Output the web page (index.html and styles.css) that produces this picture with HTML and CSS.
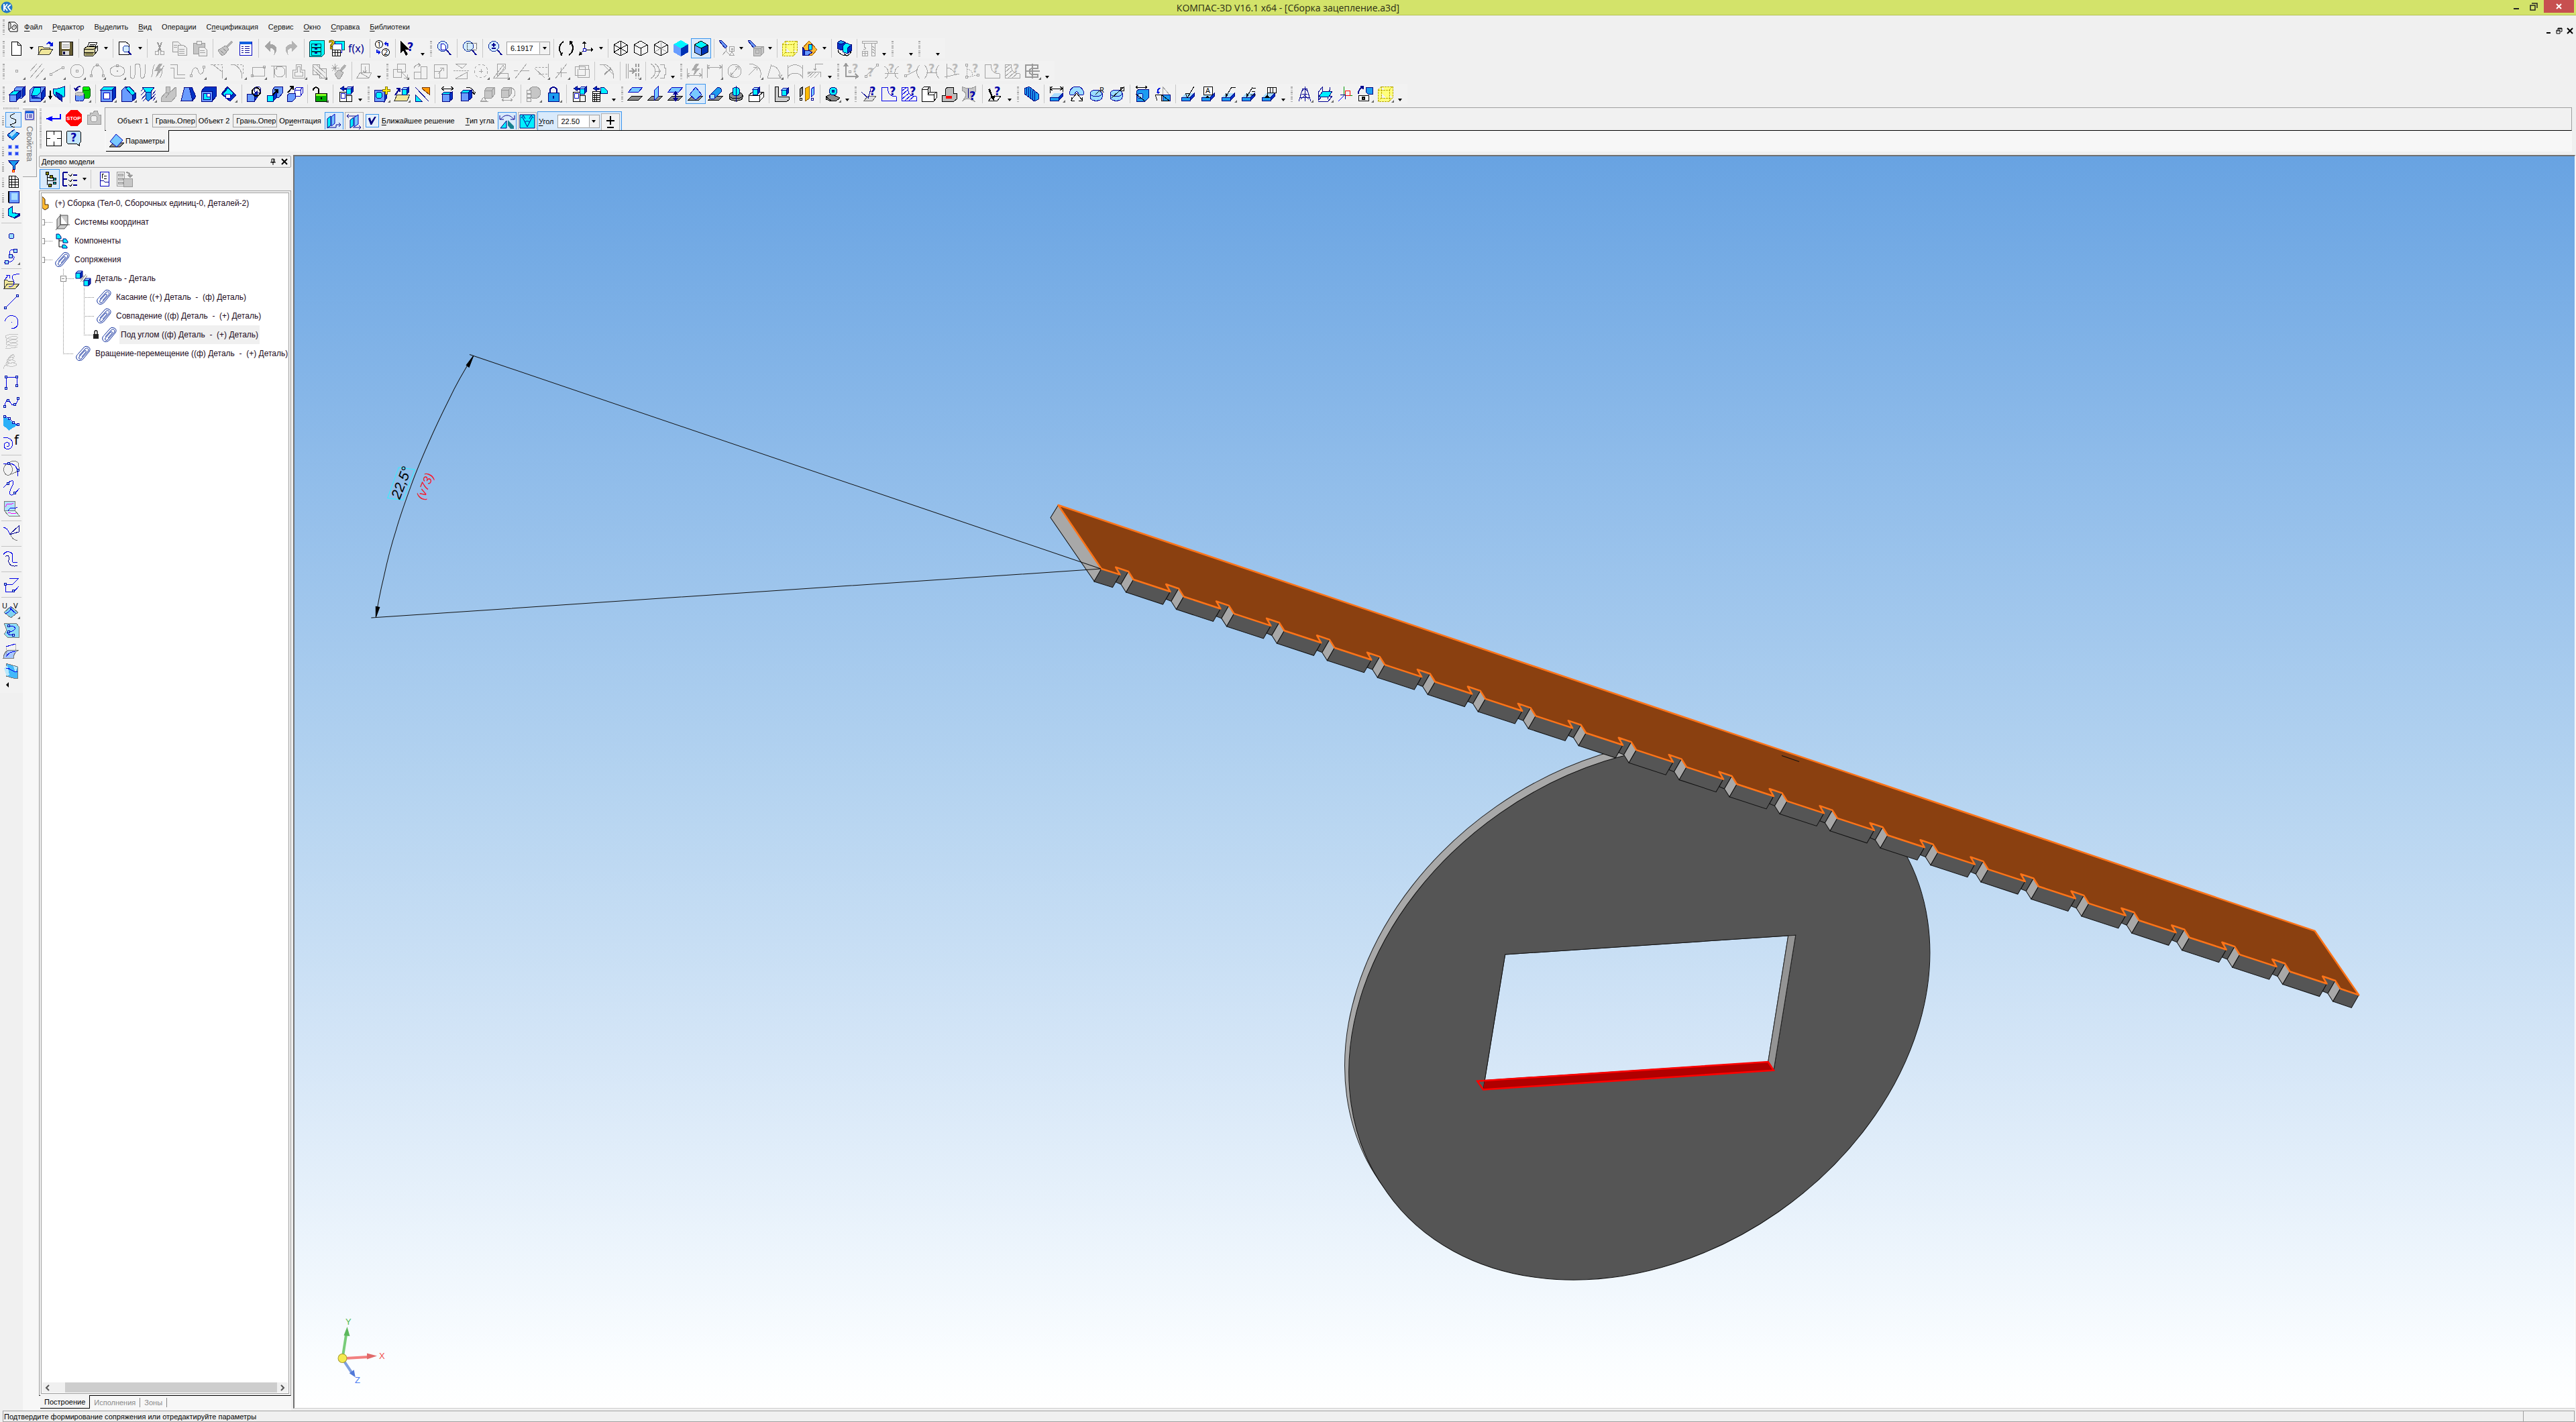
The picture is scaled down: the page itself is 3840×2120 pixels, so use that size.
FILE: index.html
```html
<!DOCTYPE html>
<html lang="ru">
<head>
<meta charset="utf-8">
<title>КОМПАС-3D V16.1 x64 - [Сборка зацепление.a3d]</title>
<link rel="stylesheet" href="styles.css">
</head>
<body>
<svg class="defs" aria-hidden="true">
<defs>
<g id="mini"><path class="C" d="M0 3h7v8h-7z"/><path class="S" d="M0 3l3-3h7l-3 3z"/><path class="D" d="M7 3l3-3v8l-3 3z"/></g>
<g id="hex"><path class="k" d="M12 1l10 6v11l-10 5-10-5v-11zM2 7l10 5 10-5M12 12v11"/></g>
<g id="lens"><circle class="L" cx="10" cy="9" r="7.500"/><path class="nn" d="M16 15l6 7"/></g>
<g id="plane"><path class="P" d="M1 21l6-6h16l-6 6z"/></g>
<g id="slab"><path class="L0" d="M2 17l7-6h12l-6 6z"/><path class="A" d="M2 17h13v5h-13z"/><path class="D" d="M15 17l6-6v5l-6 6z"/></g>
<g id="disk"><path class="S" d="M2 11v6c0 7 18 7 18 0v-6"/><ellipse class="S" cx="11" cy="11" rx="9" ry="5"/></g>
<g id="clip"><path class="nc" d="M6 15l9-10c4-3 6 1 4 4l-9 10c-3 3-5 1-4-2l8-9c2-1 3 0 2 2l-6 7M19 2c3 1 4 4 2 7l-9 11c-4 4-9 3-10-1-1-3 1-5 3-7l8-9c2-2 4-2 6-1"/></g>
<g id="sheets"><path class="k" d="M3 9h10v14h-10zM13 14h8v9h-8z"/><path class="W" d="M5 11h6v7h-6z"/><path class="D" d="M4 4l5-3v2h4v2h-4v2z"/></g>
<g id="tooth"><path class="dark" d="M1669.500 857.300L1663.200 846.300 1682 852.700 1671 871.700 1663.300 868.500Z"/><path class="light" d="M1682 852.700l7.600 12-11 19-7.600-12z"/></g>
<g id="link"><use href="#tooth"/><path class="dark" d="M1689.600 864.700l54.900 18-11 19-54.900-18z"/></g>
<g id="links4"><use href="#link"/><use href="#link" transform="translate(74.960 25.400)"/><use href="#link" transform="translate(149.920 50.800)"/><use href="#link" transform="translate(224.880 76.200)"/></g>
<linearGradient id="sky" x1="0" y1="0" x2="0" y2="1"><stop offset="0" stop-color="#68a3e2"/><stop offset=".26" stop-color="#91bdea"/><stop offset=".5" stop-color="#b4d3f0"/><stop offset=".72" stop-color="#d5e6f7"/><stop offset=".96" stop-color="#fafdff"/><stop offset="1" stop-color="#fff"/></linearGradient>
<clipPath id="under"><path d="M1900 900L3450 1389V2100H1900Z"/></clipPath>
</defs>
</svg>

<header class="title">
  <svg class="logo" width="18" height="18"><circle cx="9" cy="9" r="8.500" fill="#2478c8"/><path d="M5 4v10M6 9l4-5M6 9l4 5M10 9l5-4M11 9l4 5" stroke="#fff" stroke-width="2" fill="none"/></svg>
  <h1>КОМПАС-3D V16.1 x64 - [Сборка зацепление.a3d]</h1>
  <div class="winbtns">
    <button aria-label="Свернуть"><svg width="10" height="12"><path d="M1 9h8" stroke="#222" stroke-width="2"/></svg></button>
    <button aria-label="Развернуть"><svg width="12" height="12"><path d="M3 1h8v7M1 4h7v7h-7z" fill="none" stroke="#222" stroke-width="1.500"/></svg></button>
    <button class="close" aria-label="Закрыть"><svg width="9" height="9"><path d="M1 1l7 7M8 1l-7 7" stroke="#fff" stroke-width="2"/></svg></button>
  </div>
</header>

<nav class="menu">
  <i class="grip"></i>
  <svg width="18" height="18"><path class="kw" d="M2 2h9l4 4v10h-11l-2-3z"/><path class="k" d="M2 13l3-2v-7l-3-2M7 9l3-3 3 1v4l-3 2-3-1zM9 9h2"/></svg>
  <a href="#"><u>Ф</u>айл</a><a href="#"><u>Р</u>едактор</a><a href="#">В<u>ы</u>делить</a><a href="#"><u>В</u>ид</a><a href="#">Опера<u>ц</u>ии</a><a href="#">С<u>п</u>ецификация</a><a href="#">С<u>е</u>рвис</a><a href="#"><u>О</u>кно</a><a href="#"><u>С</u>правка</a><a href="#"><u>Б</u>иблиотеки</a>
  <div class="mdi">
    <button aria-label="Свернуть документ"><svg width="10" height="10"><path class="k2" d="M2 8h6"/></svg></button>
    <button aria-label="Восстановить документ"><svg width="10" height="10"><path class="k2" d="M3 1.500h6"/><path class="k" d="M9 1v5h-2M1 4h5v5h-5zM1 5h5M3 1v2"/></svg></button>
    <button aria-label="Закрыть документ"><svg width="10" height="10"><path class="k2" d="M1 1l8 8M9 1l-8 8"/></svg></button>
  </div>
</nav>

<div class="bars">
<div class="row">
 <div class="tb"><i class="grip"></i>
  <button><svg><path class="kw" d="M4 2h9l5 5v15h-14z"/><path class="k" d="M13 2v5h5"/></svg></button><b class="dd"></b>
  <button><svg><path class="O" d="M1 21v-12h6l2 2h9v3"/><path class="O" d="M1 21l5-8h17l-5 8z"/><path class="blu" d="M13 6c2-5 6-5 8-2l2-1v6h-6l2-2c-1-2-3-2-6-1"/></svg></button>
  <button><svg><path fill="#665c33" stroke="#111" d="M2 2h20v20h-20z"/><path fill="#fff" d="M6 3h12v10h-12z"/><path class="g" d="M7 6h10M7 8h10M7 10h10"/><path fill="#ddd" d="M7 16h10v6h-10z"/><path fill="#004" d="M8 17h3v4h-3z"/></svg></button><s></s>
  <button><svg><path class="kw" d="M6 11l3-8h12l-4 8z"/><path class="k" d="M10 6h8M9 8h8"/><path fill="#d8d2a0" stroke="#000" d="M1 13l5-4h15l-4 5v7l-2 2h-13l-1-2z"/><path class="k" d="M1 13h15l5-4v7l-4 5M2 18h14"/><path fill="#8a8450" d="M3 19h12v3h-12z"/></svg></button><b class="dd"></b><s></s>
  <button><svg><path class="kw" d="M2 2h10l5 4v15h-15z"/><circle class="L" cx="13" cy="13" r="5"/><path class="nn" d="M16 17l5 5"/></svg></button><b class="dd"></b><s></s>
  <button><svg><path class="gg" d="M9 3l5 13M15 3l-5 13"/><circle class="g" cx="8" cy="19" r="3"/><circle class="g" cx="16" cy="19" r="3"/></svg></button>
  <button><svg><path class="Gw" d="M1 2h8l4 4v11h-12z"/><path class="Gw" d="M9 7h8l5 4v11h-13z"/><path class="g" d="M3 7h5M3 10h5M11 13h8M11 16h8M11 19h8"/></svg></button>
  <button><svg><path class="G" d="M2 4h17v16h-17z"/><path class="Gw" d="M7 1h7v5h-7zM10 10h8l4 4v9h-12z"/><path class="g" d="M12 15h7M12 18h8"/></svg></button><s></s>
  <button><svg><path class="G" d="M12 8l-11 7 3 5 4 3 4-3 5-7z"/><path class="ggg" d="M14 10l8-8"/><path class="Gw" d="M4 15l6 5M8 12l6 5"/></svg></button>
  <button><svg><path class="W" d="M3 2h18v20h-18z"/><path fill="#1060e0" d="M3 2h18v4h-18z"/><path class="n" d="M6 9h3M11 9h7M6 12h3M11 12h7M6 15h3M11 15h7M6 18h3M11 18h7"/></svg></button><s></s>
  <button><svg><path fill="#a4a4a4" d="M2 9l9-8v5c11 0 12 9 5 17 3-8 0-11-5-11v5z"/></svg></button>
  <button><svg><path fill="#b4b4b4" d="M22 9l-9-8v5c-11 0-12 9-5 17-3-8 0-11 5-11v5z"/></svg></button><s></s>
  <button><svg><path class="C2" d="M1 3l3-3h19v21l-3 3h-19z"/><path class="C2" d="M4 5h14v5h-14zM4 11h14v5h-14zM4 17h14v5h-14z"/><path class="nn" d="M9 7h4M9 13h4M9 19h4"/></svg></button>
  <button><svg><path class="C2" d="M9 1h14v13h-14z"/><path class="W" d="M5 5h14v13h-14z"/><path class="kw" d="M5 14h12v9h-12zM5 18h12M9 14v9M13 14v9"/><text class="q gold" x="0" y="13">?</text></svg></button>
  <button><svg><text class="fx" x="-1" y="18">f(x)</text></svg></button><s></s>
  <button><svg><circle class="kw" cx="7" cy="6" r="5.500"/><circle class="kw" cx="17" cy="18" r="5.500"/><text x="4" y="10" class="sm">1</text><text x="14" y="22" class="sm">2</text><path class="blu" d="M14 5l4-3v2h3v5h-2v-3h-1v2zM10 18l-4 3v-2h-3v-5h2v3h1v-2z"/></svg></button><s></s>
  <button><svg><path d="M1 1v18l4-4 4 8 3-2-4-7h6z"/><text class="q" x="11" y="16">?</text></svg></button><b class="dd lo"></b>
 </div>
 <div class="tb"><i class="grip"></i>
  <button><svg><use href="#lens"/><path class="W" d="M7 5h4l3 3v6h-7z"/></svg></button><s></s>
  <button><svg><use href="#lens"/><path class="k" stroke-dasharray="1 1" d="M8 4h14v10h-14z"/></svg></button><s></s>
  <button><svg><use href="#lens"/><path class="nn" d="M10 4v6M7 7h6M7 12h6"/></svg></button>
  <span class="combo zoom"><input aria-label="Масштаб" value="6.1917"><button aria-label="Список масштабов"><b class="dd"></b></button></span><s></s>
  <button><svg><path class="k2" d="M6 21c-6-5-5-15 2-19M18 3c6 5 5 15-2 19"/><path d="M6 23l-4-1 5-5zM17 1l5 1-5 5z"/></svg></button>
  <button><svg><path class="k" d="M9 13v-9M10 14h9M8 15l-6 6"/><path d="M9 1l-3 4h6zM23 14l-4-3v6zM1 23l1-6 4 4z"/><path class="W" d="M7 12h4v4h-4z"/></svg></button><b class="dd"></b><s></s>
  <button><svg><use href="#hex"/><path class="k" d="M12 1v11M2 18l10-6 10 6"/></svg></button>
  <button><svg><use href="#hex"/></svg></button>
  <button><svg><use href="#hex"/><path class="g" d="M12 1v11M2 18l10-6 10 6"/></svg></button>
  <button><svg><path fill="#00f4ff" d="M12 0l11 6-11 6-11-6z"/><path fill="#699dff" d="M1 6l11 6v12l-11-6z"/><path fill="#0032b4" d="M23 6l-11 6v12l11-6z"/></svg></button>
  <button class="on"><svg><path fill="#00f4ff" d="M12 1l10 6-10 5-10-5z"/><path fill="#699dff" d="M2 7l10 5v11l-10-5z"/><path fill="#0032b4" d="M22 7l-10 5v11l10-5z"/><use href="#hex"/></svg></button><s></s>
  <button><svg><path class="B" d="M1 1l3-1 9 9-3 3z"/><path class="g" d="M6 22l5-6v-5M11 16l6 6M16 9h7v7h-7zM19 12h2v2h-2zM17 22l3-5 3 5z"/></svg></button><b class="dd"></b>
  <button><svg><path class="B" d="M1 1l3-1 9 9-3 3z"/><path class="G" d="M9 12l4-3h11v10l-4 4h-11zM9 12h11v11M20 12l4-3"/><circle class="g" cx="15" cy="17" r="3"/></svg></button><b class="dd"></b><s></s>
  <button><svg><path class="Y" d="M1 6l5-5h17v17l-5 5h-17zM1 6h17v17M18 6l5-5M6 1v17h17M1 23l5-5"/></svg></button>
  <button><svg><path fill="#fb3" stroke="#a60" d="M1 12l10-11 12 13-7 8h-5z"/><path class="D" d="M1 10l9 12h-9z"/><path class="C" d="M10 7v8l5-1v-8z"/><path class="B" d="M4 16l6-1 6 3-6 4h-6z"/></svg></button><b class="dd"></b><s></s>
  <button><svg><path class="D" d="M2 4l5-4 7 3v8l-6 4-6-3z"/><path class="A" d="M2 4l5-4 7 3-6 3z"/><path class="C" d="M10 9l5-5 8 3v9l-6 4-7-3z"/><path class="D" d="M17 12l6-5v9l-6 4z"/><path class="k" d="M3 14c0 5 6 9 13 9l-4-3M23 16c-1 4-3 6-7 7"/></svg></button><s></s>
  <button><svg><path class="g" d="M1 1h22v3h-22zM15 4h5v19h-5zM15 8l5 4M15 12l5 4M15 16l5 4M4 4v6c5 2 1 5-1 3M1 16h8v7h-8zM5 16v7M1 19h8"/></svg></button><b class="dd lo"></b>
 </div>
 <div class="tb"><i class="grip"></i><b class="dd lo far"></b></div>
 <div class="tb"><i class="grip"></i><b class="dd lo far"></b></div>
</div>

<div class="row">
 <div class="tb"><i class="grip"></i>
  <button class="m"><svg><circle class="g" cx="12" cy="12" r="2"/></svg></button>
  <button class="m"><svg><path class="g" d="M2 22l18-21M10 23l13-15M2 12l10-11"/></svg></button>
  <button class="m"><svg><path class="g" d="M3 16l17-9"/><circle class="g" cx="3" cy="17" r="2"/><circle class="g" cx="21" cy="7" r="2"/></svg></button>
  <button class="m"><svg><circle class="g" cx="12" cy="12" r="10"/><circle class="g" cx="12" cy="12" r="2"/></svg></button>
  <button class="m"><svg><path class="g" d="M3 19c0-21 18-21 18 0"/><circle class="g" cx="3" cy="19" r="2"/><circle class="g" cx="12" cy="3" r="2"/><circle class="g" cx="21" cy="19" r="2"/></svg></button>
  <button class="m"><svg><ellipse class="g" cx="12" cy="12" rx="11" ry="8"/><circle class="g" cx="12" cy="12" r="1"/><circle class="g" cx="12" cy="4" r="2"/></svg></button>
  <button><svg><path class="g" d="M1 4v13c0 8 7 8 7 1v-11c0-8 8-8 8 0v10c0 9 7 6 7-1v-14"/></svg></button>
  <button><svg><path class="g" d="M2 21c4-1 1-16 6-19M22 4c-5 1-2 16-7 18"/><path fill="#aaa" d="M14 1l-7 11h5l-3 10 11-14h-5l4-7z"/></svg></button>
  <button><svg><path class="g" d="M1 2h10v15h12M1 7h5v15h17"/></svg></button>
  <button class="m"><svg><path class="g" d="M2 18c3-16 9-12 11-5s8 2 8-5"/><circle class="g" cx="2" cy="19" r="2"/><circle class="g" cx="21" cy="6" r="2"/></svg></button>
  <button class="m"><svg><path class="g" d="M4 2l14 11v10"/><path class="g" stroke-dasharray="3 2" d="M1 2h17v12"/></svg></button>
  <button class="m"><svg><path class="g" d="M1 2c10 0 17 8 17 21"/><path class="g" stroke-dasharray="3 2" d="M5 2h14v16"/></svg></button>
  <button class="m"><svg><path class="g" d="M3 6h18v13h-18z"/><circle class="g" cx="3" cy="19" r="2"/><circle class="g" cx="21" cy="6" r="2"/></svg></button>
  <button><svg><circle class="g" cx="14" cy="13" r="8"/><path class="g" d="M5 22v-18h18v18M1 4h8v6"/></svg></button>
  <button class="m"><svg><path class="g" d="M8 2h8v8h5v12h-18v-12h5zM10 5h4v8h4v6h-12v-6h4z"/></svg></button>
  <button class="m"><svg><path class="Gw" d="M3 2h10v6h10v14h-10v-5h-10z"/><path class="g" d="M3 9l14 13M3 4l19 18M8 2l14 13"/></svg></button>
  <button><svg><path class="G" d="M12 10l-6 6 4 7 4 0 5-9z"/><path class="ggg" d="M15 11l7-8"/><path class="g" d="M6 1v12M1 7h12M2 3l8 9M10 3l-8 9"/></svg></button><s></s>
  <button><svg><path class="g" d="M7 14v-13h12v13M13 5v10M10 11l3 4 3-4M1 22l5-8h17l-4 8zM5 14l14 8"/></svg></button><b class="dd lo"></b>
 </div>
 <div class="tb"><i class="grip"></i>
  <button class="m"><svg><path class="g" d="M7 1h12v12h-12zM1 9h12v12h-12zM14 14l8 8M22 17v5h-5"/></svg></button>
  <button><svg><path class="g" d="M12 5h9v18h-9zM2 13h10v10h-10zM2 8c1-5 5-6 9-6M8 0l4 3-4 3"/></svg></button>
  <button><svg><path class="g" d="M2 2h19v20h-19zM2 12h8v10M8 16l8-9M11 7h5v5"/></svg></button>
  <button><svg><path class="g" d="M4 1h17l-7 7zM4 23h17v-9z"/><path class="g" stroke-dasharray="3 1" d="M1 11h23"/></svg></button>
  <button class="m"><svg><circle class="g" stroke-dasharray="4 3" cx="12" cy="12" r="10"/><path class="g" d="M9 12h6M12 9v6"/></svg></button>
  <button class="m"><svg><path class="g" d="M6 1h12v8l-12 12zM1 22l14-19 2 4-12 15zM8 15h14v7h-20"/></svg></button>
  <button class="m"><svg><path class="g" d="M3 23l17-22M1 11h6M12 11h12"/></svg></button>
  <button class="m"><svg><path class="g" d="M2 8l15 14M22 1v20"/><path class="g" stroke-dasharray="3 2" d="M3 6h19M8 16h14"/></svg></button>
  <button class="m"><svg><path class="g" d="M3 23l17-22M5 14h15M11 7v14"/></svg></button>
  <button><svg><path class="g" d="M2 5h15v13h-15zM8 9h14v-6h-14zM6 9v12h17v-12"/></svg></button><s></s>
  <button><svg><path class="g" d="M1 2h8c8 4 13 9 13 21M6 2l15 15"/><path class="gg" d="M8 17l10-9"/></svg></button><s></s>
  <button class="m"><svg><path class="gg" d="M7 12h7M11 8l4 4-4 4"/><path class="g" d="M2 1v22M5 1v22"/><path class="gg" stroke-dasharray="5 2" d="M17 1v22M21 1v22"/></svg></button><s></s>
  <button><svg><path class="g" d="M1 1c9 5 9 17 0 22M7 1c9 5 9 17 0 22M8 12h8M13 9l3 3-3 3M15 2h6v5h2v10h-2v5h-6"/></svg></button><b class="dd lo"></b>
 </div>
 <div class="tb"><i class="grip"></i>
  <button><svg><path class="g" d="M1 8v15M23 8v15M2 18h20M5 15l-4 3 4 3M19 15l4 3-4 3"/><path fill="#aaa" d="M14 1l-6 10h5l-3 9 10-12h-5l4-7z"/></svg></button>
  <button class="m"><svg><path class="g" d="M1 2v20M23 2v20M2 6h20M5 3l-4 3 4 3M19 3l4 3-4 3"/></svg></button>
  <button><svg><circle class="g" cx="12" cy="12" r="10"/><path class="g" d="M6 19l12-14M6 14v5h5M18 10v-5h-5"/></svg></button>
  <button class="m"><svg><path class="g" d="M4 1c14 1 20 11 16 21M3 18l12-12M10 6h5v5"/></svg></button>
  <button class="m"><svg><path class="g" d="M1 22h23M1 22l6-20M6 4c9 0 14 8 14 17M17 17l3 5 3-5"/></svg></button>
  <button><svg><path class="g" d="M1 3v20M23 3v20M1 8c5-7 17-7 22 0M1 21c5-8 17-8 22 0"/></svg></button>
  <button><svg><path class="g" d="M12 1h12M12 1v9M10 8l2 3 2-3M2 13h18v8M1 13v4l5-4M1 21l9-8M5 22l9-9M11 22l7-7"/></svg></button><b class="dd lo"></b>
 </div>
 <div class="tb"><i class="grip"></i>
  <button><svg><path class="gg" d="M4 3v17h17M1 5l3-4 3 4M18 16l4 4-4 3"/><circle class="g" cx="10" cy="13" r="2"/><text class="q gr" x="13" y="14">?</text></svg></button>
  <button><svg><circle class="g" cx="4" cy="20" r="2"/><circle class="g" cx="21" cy="3" r="2"/><path class="g" d="M5 18l15-14"/><text class="q gr" x="6" y="20">?</text></svg></button>
  <button><svg><path class="g" d="M1 5c8 3 8 15 1 18M23 5c-8 3-8 15-1 18M2 15h20"/><text class="q gr" x="7" y="14">?</text></svg></button>
  <button><svg><circle class="g" cx="3" cy="19" r="2"/><path class="g" d="M5 18l16-8M24 3c-6 6-6 14 0 20"/><text class="q gr" x="4" y="14">?</text></svg></button>
  <button><svg><path class="g" d="M1 3c6 6 6 14 0 20M23 3c-6 6-6 14 0 20M4 14h16"/><text class="q gr" x="7" y="14">?</text></svg></button>
  <button><svg><path class="g" d="M4 1v22M1 21l22-5M4 7c6 0 12 5 13 10"/><text class="q gr" x="12" y="14">?</text></svg></button>
  <button><svg><circle class="g" cx="4" cy="3" r="2"/><circle class="g" cx="4" cy="21" r="2"/><circle class="g" cx="21" cy="18" r="2"/><path class="g" stroke-dasharray="2 1" d="M4 5v14M6 21l13-3M4 9c6 0 9 5 9 9"/><text class="q gr" x="12" y="14">?</text></svg></button>
  <button><svg><path class="g" d="M1 2h9c0 9 5 14 13 14v6h-22z"/><text class="q gr" x="13" y="14">?</text></svg></button>
  <button><svg><path class="g" d="M1 2h9c0 9 5 14 13 14v6h-22zM1 8l8-6M1 14l9-8M1 20l11-9M6 22l9-8M12 22l7-6"/><text class="q gr" x="13" y="14">?</text></svg></button>
  <button class="m"><svg><path class="gg" d="M20 3h-18v18h18v-4h-8c-6 0-6-9 0-9h8zM12 1v22M1 12h22"/></svg></button><b class="dd lo"></b>
 </div>
</div>

<div class="row">
 <div class="tb"><i class="grip"></i>
  <button class="m"><svg><path class="B" d="M8 5l4-4h12v13l-4 4h-12z"/><path class="D" d="M20 5l4-4v13l-4 4z"/><path class="B" d="M1 13h10v10h-10z"/><path class="C" d="M1 13l7-6h10l-7 6z"/><path class="D" d="M11 13l7-6v9l-7 7z"/></svg></button>
  <button class="m"><svg><path class="B" d="M1 7l6-6h17v15l-6 7h-17z"/><path class="C" d="M8 2h9v8l-4 4h-9z"/><path class="D" d="M18 12l6-9v13l-6 7zM4 14v4h14"/></svg></button>
  <button><svg><path class="C" d="M6 5c5 0 9-1 17-4v15c-6 1-3 3-4 7-4-4-9-6-13-12z"/><path class="D" d="M10 9l9 5v9l-9-10z"/><path class="k2" d="M2 7v11M0 15l2 4 2-4"/></svg></button><s></s>
  <button class="m"><svg><path fill="#0c0" stroke="#060" d="M12 4v12c0 4 11 4 11 0v-12"/><ellipse fill="#0f0" stroke="#060" cx="17.500" cy="4" rx="5.500" ry="3"/><path class="B" d="M1 12v8c0 4 13 4 13 0v-8"/><ellipse class="G" cx="7.500" cy="12" rx="6.500" ry="3"/><path class="nn" d="M2 6c1-4 4-5 7-5M0 3l2 4 4-2"/></svg></button><s></s>
  <button class="m"><svg><path class="D" d="M1 6l5-5h17v17l-5 5h-17z"/><path class="C" d="M1 6l5-5h17l-5 5z"/><path class="B" d="M1 6h17v17h-17z"/><path class="W" d="M5 10h9v9h-9z"/></svg></button>
  <button class="m"><svg><path class="B" d="M2 7l6-6h6l9 10v8l-5 4h-16z"/><path class="C" d="M8 3l5-2 10 10-5 3z"/><path class="D" d="M18 14l5-3v8l-5 4z"/></svg></button>
  <button class="m"><svg><path class="n" d="M1 8l6-6M1 14l6-6M2 20l7-8M4 23l6-6M18 13l5-6M16 20l7-8M19 22l4-5"/><path class="C" d="M3 2h18l-5 7h-8z"/><path class="A" d="M8 9h8v10l-4 4-4-4z"/></svg></button>
  <button><svg><path class="G" d="M1 18l7-8v-9h6v9l7-7v-1h2v14l-6 7h-16zM8 10h6l-6 8M14 10l9-8"/></svg></button>
  <button><svg><path class="B" d="M1 22l5-20h7l5 20z"/><path class="D" d="M13 2h4l6 14-5 6z"/></svg></button>
  <button><svg><path class="D" d="M1 8l6-7h16v15l-6 7h-16z"/><path class="B" d="M1 8h16v15h-16z"/><path class="C" d="M4 11h10v9h-10z"/><path class="W" d="M9 11h5v5h-5z"/></svg></button>
  <button class="m"><svg><path class="D" d="M1 12l9-11 13 13-9 9z"/><path class="C" d="M3 12l8-9 8 8-8 9z"/><path class="W" d="M7 12h7v6h-7z"/></svg></button><s></s>
  <button><svg><path class="B" d="M1 12h11v11h-11z"/><path class="D" d="M12 12l4-4v10l-4 5z"/><circle class="k2" cx="15" cy="9" r="6"/><circle class="n" cx="17" cy="6" r="5"/></svg></button>
  <button><svg><path class="B" d="M9 6l4-5h11v10l-5 6h-10z"/><path class="C" d="M1 14h9v9h-9z"/><path class="D" d="M10 14l5-5v9l-5 5z"/><path class="k2" d="M9 14l8-8M12 6h5v5"/></svg></button>
  <button><svg><path class="W" d="M12 6l3-4h9v9l-3 4h-9zM12 6h9v9M21 6l3-4"/><path class="B" d="M1 15l3-4h9v8l-4 4h-8z"/><path class="k2" d="M2 10l8-9M5 1h5v5"/></svg></button><s></s>
  <button class="m"><svg><path fill="#0a0" stroke="#000" d="M5 11h17v12h-17z"/><path fill="#8f2" d="M6 12h15v3h-15z"/><path class="k2" d="M10 11v-5c0-5-8-5-8 1M14 17v3"/></svg></button><s></s>
  <button><svg><use href="#sheets"/><g transform="translate(13 1)"><use href="#mini"/></g></svg></button><b class="dd lo"></b>
 </div>
 <div class="tb"><i class="grip"></i>
  <button class="m"><svg><path class="B" d="M1 6h15v17h-15z"/><path class="D" d="M16 6l3-3v16l-3 4z"/><circle class="C" cx="8" cy="14" r="5"/><path fill="#fe0" stroke="#870" d="M17 1h3v4h4v3h-4v4h-3v-4h-4v-3h4z"/></svg></button>
  <button class="m"><svg><path class="O" d="M1 22l4-9h19l-4 9z"/><g transform="translate(12 2)"><use href="#mini"/></g><path class="nn" d="M2 14l6-9M4 4h5v5"/></svg></button>
  <button><svg><path fill="#f90" stroke="#730" d="M12 2h11v11l-11-9z"/><path class="C" d="M2 13v10h10z"/><path class="n" d="M2 2l20 21"/></svg></button><s></s>
  <button><svg><path class="k" d="M4 4h16M7 1l-4 3 4 3M17 1l4 3-4 3"/><path class="B" d="M4 12h11v11h-11z"/><path class="D" d="M15 12l4-3v11l-4 3z"/><path class="C" d="M4 12l3-3h12l-4 3z"/></svg></button>
  <button><svg><path class="B" d="M2 10h11v12h-11z"/><path class="D" d="M13 10l5-4v12l-5 4z"/><path class="C" d="M2 10l4-4h12l-5 4z"/><path class="k" d="M10 2c8 0 11 3 12 9M19 9l3 4 2-4"/></svg></button>
  <button><svg><path class="G" d="M7 7l4-5h11v11l-4 5h-11zM7 7h11v11M18 7l4-5"/><path class="g" d="M2 22l4-5 4 5zM1 23h12"/></svg></button>
  <button><svg><path class="G" d="M2 6l4-4h11v10l-4 5h-11zM2 6h11v11M13 6l4-4"/><path class="g" d="M18 3c7 4 6 11 1 15M4 21h14M6 19l-3 2 3 2M16 19l3 2-3 2"/></svg></button><s></s>
  <button class="m"><svg><circle class="G" cx="14" cy="10" r="9"/><path class="Gw" d="M2 6h6v5h-6zM2 12h6v5h-6zM2 18h6v5h-6z"/></svg></button>
  <button class="m"><svg><path class="A" d="M4 10h16v13h-16z"/><path class="nn" d="M7 10v-4c0-5 10-5 10 0v4M12 15v4"/></svg></button><s></s>
  <button><svg><use href="#sheets"/><g transform="translate(13 1)"><use href="#mini"/></g></svg></button>
  <button><svg><path class="k" d="M2 8h11v15h-11zM2 11h11M2 14h11M2 17h11M2 20h11M5 11v12M8 11v12"/><path class="D" d="M3 4l5-3v2h4v2h-4v2z"/><path class="C" d="M14 2h5l5 5v4h-10z"/></svg></button><b class="dd lo"></b>
 </div>
 <div class="tb"><i class="grip"></i>
  <button><svg><path class="V" d="M2 9l6-7h15l-6 7z"/><use href="#plane"/></svg></button>
  <button><svg><use href="#plane"/><path class="V" d="M10 7l6-6v15l-6 6z"/></svg></button>
  <button><svg><path class="V" d="M1 9l6-7h16l-6 7z"/><use href="#plane"/><path class="nn" d="M12 10v10M9 13l3-4 3 4M9 18l3 4 3-4"/></svg></button>
  <button class="on"><svg><use href="#plane"/><path class="V" d="M3 13l9-11 9 11-9 8z"/></svg></button>
  <button><svg><use href="#plane"/><path class="A" d="M3 14l11-11c4-2 8 2 6 6l-10 10c-5 2-9-1-7-5z"/><circle class="S" cx="7" cy="16" r="4"/></svg></button>
  <button><svg><path class="P" d="M2 14v3c0 7 20 7 20 0v-3"/><ellipse class="P" cx="12" cy="14" rx="10" ry="5"/><path class="C" d="M7 5v7c0 3 10 3 10 0v-7c0-3-10-3-10 0"/><path class="n" d="M12 0v24"/></svg></button>
  <button><svg><path class="kw" d="M1 14h16v9h-16zM1 14l6-5h16l-6 5M17 23l6-6v-8"/><g transform="translate(7 2)"><use href="#mini"/></g></svg></button><s></s>
  <button><svg><path fill="#ccc" stroke="#000" d="M2 1h5v15h16v5l-3 2h-18z"/><g transform="translate(12 3)"><use href="#mini"/></g></svg></button><s></s>
  <button><svg><path class="P" d="M1 5l4-3v11l-4 4z"/><path fill="#fb0" stroke="#960" d="M9 4l6-3v18l-6 4z"/><path class="V" d="M18 5l4-3v11l-4 4z"/><circle class="k" cx="3" cy="20" r="2"/><circle class="n" cx="20" cy="20" r="2"/></svg></button><s></s>
  <button class="m"><svg><path class="P" d="M2 16l8-4 13 6-5 4-8 0zM2 16v4l8 3"/><circle class="C" cx="13" cy="8" r="6"/><circle class="D" cx="13" cy="8" r="2"/></svg></button><b class="dd lo"></b>
 </div>
 <div class="tb"><i class="grip"></i>
  <button><svg><path class="P0" d="M5 22l6-7h12l-5 7z"/><path class="n" d="M1 9l11 10M11 19l4-14"/><text class="q" x="13" y="14">?</text></svg></button>
  <button><svg><path class="nb" d="M1 2h9c0 9 5 14 13 14v6h-22z"/><text class="q" x="13" y="14">?</text></svg></button>
  <button><svg><path class="nb" d="M1 2h9c0 9 5 14 13 14v6h-22zM1 8l8-6M1 14l9-8M1 20l11-9M6 22l9-8M12 22l7-6"/><text class="q" x="13" y="14">?</text></svg></button>
  <button><svg><path class="kw" d="M1 5l4-4h8v8h10v9l-4 5h-18zM1 5h9v8h9v10M10 5l3-4M10 13l3-4M19 13l4-4"/></svg></button>
  <button><svg><path fill="#bbb" stroke="#000" d="M1 14h5v-9l4-3h8v9h5v9l-4 3h-18z"/><path fill="#f00" d="M7 15h9v4h-9z"/></svg></button>
  <button><svg><path class="G" d="M1 1c8 4 13 4 20 0v8c-9 4-9 6-1 14l-1 0c-8-5-11-5-18 0 8-8 8-13 0-16z"/><path class="n" d="M10 4v14"/><text class="q" x="12" y="21">?</text></svg></button><s></s>
  <button><svg><path class="kw" d="M3 22l5-7h13l-5 7z"/><path d="M2 5l3-1 4 12 3-2-1 8-6-5 2 0z"/><text class="q" x="11" y="14">?</text></svg></button><b class="dd lo"></b>
 </div>
 <div class="tb"><i class="grip"></i>
  <button><svg><path class="A" d="M2 4l7-3 14 11v8l-6 3-15-11z"/><path class="n" d="M5 2v11M8 3v13M11 5v14M14 7v14M17 9v13"/></svg></button><s></s>
  <button class="m"><svg><use href="#slab"/><path class="k" d="M2 1v10M21 1v8M3 4h17M6 1l-4 3 4 3M17 1l4 3-4 3"/></svg></button>
  <button><svg><path class="S" d="M2 13c-3-16 23-16 20 0h-6l-4-5-4 5z"/><path class="k" d="M3 22l9-11 9 11M4 17v5h5M20 17v5h-5"/></svg></button>
  <button><svg><use href="#disk"/><text x="16" y="10" class="sm">R</text><path class="k" d="M10 13l6-6"/></svg></button>
  <button><svg><use href="#disk"/><circle class="k" cx="20" cy="5" r="3"/><path class="k" d="M4 18l19-17"/></svg></button><s></s>
  <button><svg><path class="A" d="M3 8l4-3h14v13l-5 5h-13z"/><circle class="S" cx="9" cy="15" r="4"/><path class="k" d="M3 2h15M5 0l-3 2 3 2M16 0l3 2-3 2M2 12l14 11"/></svg></button>
  <button><svg><path class="A" d="M12 13h11v9h-11z"/><path class="k" d="M1 13h9v9h12M10 13l12 9M4 22l-3-9"/><path class="g" d="M12 1v12M12 1l10 12"/><path class="blu" d="M2 9l3 3 3-3h-2c0-3 1-5 3-6-4 0-6 3-5 6z"/></svg></button><s></s>
  <button><svg><use href="#slab"/><path class="k" d="M8 11h7l-4 7zM13 14l8-13"/></svg></button>
  <button><svg><use href="#slab"/><path class="kw" d="M5 1h13v12h-13z"/><text x="8" y="11" class="sm">A</text><path d="M11 14l-3 4h6z"/></svg></button>
  <button class="m"><svg><use href="#slab"/><path class="k" d="M23 2h-6l-8 13"/><path d="M8 17l0-6 4 3z"/></svg></button>
  <button><svg><use href="#slab"/><path class="k" d="M11 14l7-12M23 3h-6M17 8h5M15 13h8"/><path d="M9 17l0-6 4 3z"/></svg></button>
  <button><svg><use href="#slab"/><path class="kw" d="M10 2h13v8h-13zM14 2v8M18 2v8"/><path class="k" d="M10 2v12"/><path d="M10 13l-4 5h8z"/></svg></button><b class="dd lo"></b>
 </div>
 <div class="tb"><i class="grip"></i>
  <button class="m"><svg><path class="n" d="M3 23l6-19h6l6 19M8 12h8M5 17h14M12 1v22M8 8l4-4 4 4M6 20l6-6 6 6"/></svg></button>
  <button class="m"><svg><path class="n" d="M2 22v-12l6-8v9M2 22l6-7h15l-6 8h-15M20 2l-4 18"/><path class="C" d="M3 16l6-8h14l-5 8z"/></svg></button>
  <button><svg><path d="M12 14h11" stroke="#090"/><path d="M11 14l-9 9" stroke="#00f"/><path d="M10 1v14" stroke="#090"/><path fill="none" stroke="#f00" d="M12 7h7v7h-7z"/><path class="n" d="M5 13h7v7"/></svg></button>
  <button class="m"><svg><path class="kw" d="M2 14h15v8h-15z"/><path class="k2" d="M8 17h3v3h-3z"/><path class="A" d="M13 2h10v10h-7l-3-3z"/><path class="nn" d="M2 12c0-6 2-9 7-10M5 1h4v4"/></svg></button>
  <button class="m"><svg><path class="Y" d="M1 6l5-5h17v17l-5 5h-17zM1 6h17v17M18 6l5-5M6 1v17h17M1 23l5-5"/></svg></button><b class="dd lo"></b>
 </div>
</div>
</div>

<div class="work">
<aside class="left">
 <i class="hgrip"></i>
 <div class="sets">
  <div><i class="grip"></i><button class="on"><svg><path class="k" d="M13 1c-8 3-9 6-2 8s4 7-2 8 0 4 4 5"/></svg></button></div>
  <div><i class="grip"></i><button><svg><path class="A" d="M2 10l10-8c3 6 6 4 8 6l-10 10c-2-4-5-2-8-8z"/><path class="L0" d="M5 9l8-6 3 3-8 7z"/></svg></button></div>
  <div><i class="grip"></i><button><svg><circle class="ball" cx="6" cy="5" r="3"/><circle class="ball" cx="16" cy="5" r="3"/><circle class="ball" cx="6" cy="15" r="3"/><circle class="ball" cx="16" cy="15" r="3"/></svg></button></div>
  <div><i class="grip"></i><button><svg><path class="A" d="M3 2h17l-7 8v5h-3v-5z"/><circle cx="11" cy="18" r="2" fill="#fe0" stroke="#e00"/></svg></button></div>
  <div><i class="grip"></i><button><svg><path class="kw" d="M4 2h10l4 4v13h-14zM4 7h14M4 11h14M4 15h14M8 2v17M13 2v17"/></svg></button></div>
  <div><i class="grip"></i><button><svg><path class="B" d="M4 2h15v17h-15z"/><path class="L0" d="M8 5h9v10h-9z"/><path class="k2" d="M4 2v17"/></svg></button></div>
  <div><i class="grip"></i><button><svg><path class="C" d="M3 6l6-4v9l11 2-8 6-9-4z"/><path class="D" d="M12 19l8-6v3l-8 4z"/></svg></button></div>
 </div>
 <hr>
 <button><svg><circle class="S" cx="12" cy="12" r="4"/></svg></button>
 <button class="m"><svg><path class="nb" d="M20 3c-12-4-14 7-7 8s2 12-12 10"/><circle class="S" cx="18" cy="4" r="3"/><circle class="S" cx="11" cy="12" r="3"/><circle class="S" cx="5" cy="21" r="3"/></svg></button>
 <hr>
 <button><svg><path class="O" d="M1 21v-12h4l2 2h8v3"/><path class="O" d="M1 22l5-7h18l-6 7z"/><path class="nb" d="M24 1c-12-1-12 4-9 9s-1 10-7 10M2 9l6-7M4 2h5v5"/></svg></button>
 <button><svg><path class="nb" d="M4 20l17-17"/><circle class="S" cx="3" cy="21" r="2"/><circle class="S" cx="21" cy="3" r="2"/></svg></button>
 <button><svg><path class="nb" d="M2 11c3-12 20-11 20 1 0 8-6 10-10 10"/><path class="nb" d="M12 12h1"/></svg></button>
 <button><svg><path class="lg" d="M22 1c-6-1-18-1-19 3s20 5 18 1-16 0-17 4 19 5 17 1-16 0-17 4 19 5 17 1-16 0-17 5M3 22c4-1 14-1 18-3"/></svg></button>
 <button><svg><path class="lg" d="M16 1c-6-1-8 4-3 4s4-4 0-3-9 7-4 7 9-3 4-4-12 7-4 8 12-3 5-4-16 8-5 9 14-4 6-5-16 5-14 9"/></svg></button>
 <button><svg><path class="nb" d="M4 20v-16h16v13"/><circle class="S" cx="4" cy="21" r="2"/><circle class="S" cx="4" cy="4" r="2"/><circle class="S" cx="20" cy="4" r="2"/><circle class="S" cx="20" cy="17" r="2"/></svg></button>
 <button><svg><path class="nb" d="M2 18c2-13 6-10 9-5s9 4 11-7"/><circle class="S" cx="2" cy="18" r="2"/><circle class="S" cx="7" cy="9" r="2"/><circle class="S" cx="17" cy="15" r="2"/><circle class="S" cx="22" cy="6" r="2"/></svg></button>
 <button><svg><path fill="#2ab0f8" d="M0 4c12 1 10 10 22 11l-14 9c-3-3-5-6-8-7z"/><path class="nb" d="M2 3c10 1 12 13 20 12"/><circle class="S" cx="2" cy="3" r="2"/><circle class="S" cx="9" cy="6" r="2"/><circle class="S" cx="15" cy="12" r="2"/><circle class="S" cx="22" cy="15" r="2"/></svg></button>
 <button><svg><path class="nb" d="M0 5c12-2 15 6 13 12s-12 6-12-1c0-5 8-6 8-1 0 3-3 3-4 2"/><text x="16" y="15" class="big">f</text></svg></button>
 <hr>
 <button><svg><ellipse class="k3" cx="7" cy="14" rx="6.500" ry="8.500"/><path class="k3" d="M8 5c5-6 16-5 15 5l0 6-11 5"/><path class="nb" d="M0 5h8c8 0 14 5 14 19"/><circle class="S" cx="8" cy="5" r="2"/><circle class="S" cx="22" cy="15" r="2"/></svg></button>
 <button><svg><path class="nb" d="M0 11l8-8c8-6 8 1 5 6s-6 14 0 13l5-3 6-7"/><circle class="S" cx="7" cy="5" r="2"/><circle class="S" cx="17" cy="19" r="2"/></svg></button>
 <button><svg><path fill="#b0e2fa" stroke="#777" d="M1 1h16v14h-16z"/><path fill="#d8fafa" stroke="#777" d="M1 15h16l7 8h-16z"/><path fill="none" stroke="#f0e" d="M3 10c3-9 6-2 12-6M7 19c4-1 8 2 12 0"/><path class="nb" d="M7 16c4-9 8-1 14-6"/></svg></button>
 <hr>
 <button><svg><path class="nb" d="M0 2c7 2 7 6 10 11"/><path class="k3" d="M10 12c3 6 5 9 11 10"/><path class="n" d="M9 13l14-13v9z"/></svg></button>
 <hr>
 <button><svg><path class="nb" d="M0 5c4-7 14-5 14 2s-2 10 3 10l4-1"/><path class="n" d="M3 8c5-5 6 1 5 5-1 7 6 11 13 8"/></svg></button>
 <hr>
 <button><svg><path class="nb" d="M9 2h14l-9 9h-11v11h13l7-8"/><circle class="S" cx="3" cy="11" r="2"/><circle class="S" cx="15" cy="21" r="2"/></svg></button>
 <hr>
 <button class="m"><svg><path fill="#7ed2f2" stroke="#777" d="M1 15l10-9 11 9-11 8z"/><path class="nb" d="M3 17c6-2 9-7 9-11M9 8l10 9"/><text x="-2" y="9" class="sm">U</text><text x="15" y="9" class="sm">V</text></svg></button>
 <button><svg><path fill="#8edcf4" stroke="#777" d="M1 1h18l4 5v16h-17l-5-5c6-5 3-7 0-16z"/><path class="nb" d="M8 5c16 0 8 9 1 9s-2 6 7 5"/><circle class="S" cx="8" cy="5" r="2"/><circle class="S" cx="8" cy="14" r="2"/><circle class="S" cx="15" cy="19" r="2"/></svg></button>
 <button><svg><path fill="#a8c8ff" stroke="#777" d="M0 23c1-8 5-12 11-12h12c-5 3-8 6-8 12z"/><path class="nb" d="M4 21c4-6 7-7 14-8M4 6l14-4"/><path class="k3" stroke-dasharray="1 1" d="M4 6v14M18 2v10"/></svg></button>
 <button><svg><path fill="#44b8fa" stroke="#777" d="M4 1l17 5v17h-6l-11-3z"/><path fill="#b8e8fc" d="M1 8l5-4 3 14-4 2zM15 5l6 2-3 7z"/><path class="nb" d="M4 8c8 0 8 6 17 6"/></svg></button>
 <b class="back"></b>
</aside>
<aside class="props"><button class="vtab"><svg width="14" height="16"><path class="W" d="M1 2h12v12h-12z"/><path fill="#1060e0" d="M1 2h12v3h-12z"/><path class="n" d="M3 7h2M6 7h5M3 9h2M6 9h5M3 11h2M6 11h5"/></svg><span>Свойства</span></button></aside>

<main>
<section class="prop">
 <div class="acts">
  <i class="grip tall"></i>
  <button aria-label="Создать объект"><svg><path fill="#00f" d="M0 13l10-4v8z"/><path d="M8 13h14v-7" fill="none" stroke="#00f" stroke-width="2"/></svg></button>
  <button aria-label="Прервать команду"><svg><path fill="#f00" d="M7 0h10l7 7v10l-7 7h-10l-7-7v-10z"/><text x="1" y="15" class="stop">STOP</text></svg></button>
  <button aria-label="Снимок"><svg><path class="G" d="M2 7h4v-3h5l2-3 4 0 2 6h3v14h-20z"/><circle class="Gw" cx="12" cy="13" r="5"/></svg></button>
  <button aria-label="Показать"><svg><path class="kw" d="M1 1h22v22h-22z"/><path class="k" d="M12 1v6M12 17v6M1 12h6M17 12h6"/></svg></button>
  <button aria-label="Справка"><svg><path fill="#c4e6fa" stroke="#000" d="M3 1h17l2 2v15l-2 2v3l-4-3h-13l-2-2v-15z"/><text class="q" x="7" y="17">?</text></svg></button>
 </div>
 <div class="area">
  <form class="fields">
   <label class="f1">Объект 1 <input value="Грань.Опер"></label>
   <label class="f1">Объект 2 <input value="Грань.Опер"></label>
   <span>Ор<u>и</u>ентация</span>
   <button type="button" class="tg on" aria-label="Прямая ориентация"><svg><path class="C" d="M2 8l5-4v14l-5 4z"/><path class="V" d="M8 5l5-4v14l-5 4z"/><path class="n" d="M3 21h12v-4h7M19 14l3 3-3 3"/></svg></button>
   <button type="button" class="tg" aria-label="Обратная ориентация"><svg><path class="C" d="M6 10l5-4v12l-5 4z"/><path class="V" d="M12 6l6-4v14l-6 4z"/><path class="n" d="M1 4h14M4 1l-3 3 3 3M10 21h12M19 18l3 3-3 3"/></svg></button>
   <label class="chk"><input type="checkbox" checked><span><u>Б</u>лижайшее решение</span></label>
   <span class="kind"><u>Т</u>ип угла</span>
   <button type="button" class="tg on" aria-label="Двугранный угол"><svg><path class="C" d="M2 22l9-11v11z"/><path d="M13 10l9 9v4h-5l-4-5z" fill="#188090"/><path class="n" d="M2 9c6-8 14-8 20 0M1 3v6h6M23 3v6h-6"/></svg></button>
   <button type="button" class="tg" aria-label="Плоский угол"><svg><path class="C" d="M1 2h22v20h-22z"/><path class="n" d="M12 20l-7-14M12 20l7-14M3 7l3-4 3 5M15 8l3-5 3 4M9 13c2-2 4-2 6 0"/></svg></button>
   <div class="angle"><label for="ang"><u>У</u>гол</label><span class="combo"><input id="ang" value="22.50"><button type="button" aria-label="Список углов"><b class="dd"></b></button></span><button type="button" class="tg pm" aria-label="Плюс-минус"><svg><path d="M12 3v13M6 10h12M7 20h10" stroke="#000" stroke-width="2"/></svg></button></div>
  </form>
  <div class="ptabs"><button class="ptab"><svg><use href="#plane"/><path class="V" d="M2 13l9-11 10 9-9 10z"/></svg>Параметры</button></div>
 </div>
</section>

<div class="body">
<section class="tree">
 <header><h2>Дерево модели</h2><button aria-label="Закрепить"><svg width="10" height="10"><path class="k" d="M3 1h4v5h-4zM1 6h8M5 6v4M6 1v5"/></svg></button><button aria-label="Закрыть панель"><svg width="10" height="10"><path class="k2" d="M1 1l8 8M9 1l-8 8"/></svg></button></header>
 <div class="ttools">
  <button class="on"><svg><path class="k" d="M8 3v18M8 9h10M8 14h10M10 20h6"/><path fill="#880" stroke="#000" d="M6 1h4v4h-4zM12 6h4v4h-4zM10 19h4v4h-4z"/><path fill="#0aa" stroke="#000" d="M17 10h4v3h-4zM17 16h4v3h-4z"/></svg></button>
  <button><svg><path class="nn" d="M2 2v20M2 2h7M2 12h6M2 22h6M17 6h6M17 14h6M17 21h6"/><path class="k" d="M10 5l3 3 3-4M10 13l3 3 3-4M10 20l3 3 3-4"/></svg></button><b class="dd"></b><s></s>
  <button><svg><path class="W" d="M6 1h13v21h-13z"/><path class="n" d="M6 14h5l2 2h6"/><path class="k" d="M9 4h3M12 7h4M9 4v7M12 11h4"/></svg></button>
  <button><svg><path class="Gw" d="M1 1h11v21h-11z"/><path class="G" d="M3 4h7v3h-7zM3 10h7v3h-7zM3 16h7v3h-7zM11 11h13v12h-13z"/><path class="gg" d="M15 2c5 0 6 3 6 7M18 6l3 3 3-3"/></svg></button>
 </div>
 <div class="tbox"><div class="tin">
  <svg class="lines" aria-hidden="true"><path d="M4 43h12M4 71h12M4 99h12M31 113v126M47 127h-12M62 141v70M62 155h16M62 183h16M62 211h16M31 239h16"/><path class="pm1" d="M0 39h3v8h-3M0 67h3v8h-3M0 95h3v8h-3M27 123h8v8h-8zM29 127h4"/></svg>
  <ul>
   <li class="l0"><svg><path fill="#fb3" stroke="#420" d="M0 2l4 4v8h5v5l-5 3-4-3z"/></svg>(+) Сборка (Тел-0, Сборочных единиц-0, Деталей-2)</li>
   <li class="l1"><svg><path fill="#ccc" stroke="#555" d="M4 8l5-6h11v14l-5 6h-11zM9 2v14h11M9 16l-7 8M9 16h14M9 16v-16"/></svg>Системы координат</li>
   <li class="l1"><svg><path class="k" d="M7 7v14h6M7 12h6"/><path class="C" d="M3 2h4l3 4v3h-7zM13 9h4l3 4v2h-7zM12 18h4l3 3v2h-7z"/></svg>Компоненты</li>
   <li class="l1"><svg><use href="#clip"/></svg>Сопряжения</li>
   <li class="l2"><svg><g transform="translate(1 1)"><use href="#mini"/></g><g transform="translate(13 12)"><use href="#mini"/></g><path class="k3" d="M8 17l8-11M11 17l7-9M8 14l5-6"/></svg>Деталь - Деталь</li>
   <li class="l3"><svg><use href="#clip"/></svg>Касание ((+) Деталь&nbsp; -&nbsp; (ф) Деталь)</li>
   <li class="l3"><svg><use href="#clip"/></svg>Совпадение ((ф) Деталь&nbsp; -&nbsp; (+) Деталь)</li>
   <li class="l3 lock"><svg class="pad"><path fill="#222" d="M0 6h8v7h-8z"/><path d="M2 6v-3c0-3 4-3 4 0v3" fill="none" stroke="#222" stroke-width="1.500"/></svg><svg><use href="#clip"/></svg><mark>Под углом ((ф) Деталь&nbsp; -&nbsp; (+) Деталь)</mark></li>
   <li class="l2"><svg><use href="#clip"/></svg>Вращение-перемещение ((ф) Деталь&nbsp; -&nbsp; (+) Деталь)</li>
  </ul>
  <div class="scroll"><svg width="16" height="15"><path d="M10 4l-4 4 4 4" class="k2g"/></svg><i></i><svg width="16" height="15"><path d="M6 4l4 4-4 4" class="k2g"/></svg></div>
 </div></div>
 <div class="btabs"><button class="cur">Построение</button><button>Исполнения</button><button>Зоны</button></div>
</section>

<section class="view">
<svg viewBox="439 234 3399 1865" preserveAspectRatio="none" role="img" aria-label="Модель сборки">
 <rect x="439" y="234" width="3399" height="1865" fill="url(#sky)"/>
 <g clip-path="url(#under)">
 <path fill="#a8a8a8" fill-rule="evenodd" stroke="#222" d="M2056.500 1761.300A462 358.500 -34.900 1 1 2814.500 1232.700A462 358.500 -34.900 1 1 2056.500 1761.300ZM2243.700 1423.300L2665.700 1395.300 2635.700 1583.300 2213.300 1610.700Z"/>
 <path fill="#555" fill-rule="evenodd" stroke="#111" d="M2064.900 1774A462 358.500 -34.900 1 1 2822.700 1245.400A462 358.500 -34.900 1 1 2064.900 1774ZM2243.700 1423.300L2676.700 1394.700 2644 1596 2211 1624.700Z"/>
 </g>
 <path fill="#949494" stroke="#222" d="M2665.700 1395.300L2676.700 1394.700 2644 1596 2635.700 1583.300Z"/>
 <path fill="#b00000" d="M2213.300 1611L2635.700 1583.300 2644 1596 2211 1624.700Z"/>
 <path fill="none" stroke="#f00" stroke-width="2.500" d="M2202.300 1612L2635.700 1583.300 2644 1596 2211 1624.700Z"/>
 <path class="light" d="M1577.500 753.700L1566 772.500 1631.500 867.700 1641.800 848.700Z"/>
 <path class="dark" d="M1641.800 848.700l27.700 8.600-11 19-27.700-8.600z"/>
 <use href="#links4"/><use href="#links4" transform="translate(299.840 101.600)"/><use href="#links4" transform="translate(599.680 203.200)"/><use href="#links4" transform="translate(899.520 304.800)"/><use href="#links4" transform="translate(1199.360 406.400)"/><use href="#links4" transform="translate(1499.200 508)"/>
 <use href="#tooth" transform="translate(1799.040 609.600)"/>
 <path class="dark" d="M3488.700 1474.300l27.600 9.400-11 19-27.600-9.400z"/>
 <path fill="#8a4010" stroke="#ff7418" stroke-width="2.500" stroke-linejoin="round" d="M1577.500 753.700L1641.800 848.700l27.700 8.600
 l-6.300-11 18.800 6.400 7.600 12 54.860 18 l-6.300-11 18.800 6.400 7.600 12 54.860 18 l-6.300-11 18.800 6.400 7.600 12 54.860 18 l-6.300-11 18.800 6.400 7.600 12 54.860 18
 l-6.300-11 18.800 6.400 7.600 12 54.860 18 l-6.300-11 18.800 6.400 7.600 12 54.860 18 l-6.300-11 18.800 6.400 7.600 12 54.860 18 l-6.300-11 18.800 6.400 7.600 12 54.860 18
 l-6.300-11 18.800 6.400 7.600 12 54.860 18 l-6.300-11 18.800 6.400 7.600 12 54.860 18 l-6.300-11 18.800 6.400 7.600 12 54.860 18 l-6.300-11 18.800 6.400 7.600 12 54.860 18
 l-6.300-11 18.800 6.400 7.600 12 54.860 18 l-6.300-11 18.800 6.400 7.600 12 54.860 18 l-6.300-11 18.800 6.400 7.600 12 54.860 18 l-6.300-11 18.800 6.400 7.600 12 54.860 18
 l-6.300-11 18.800 6.400 7.600 12 54.860 18 l-6.300-11 18.800 6.400 7.600 12 54.860 18 l-6.300-11 18.800 6.400 7.600 12 54.860 18 l-6.300-11 18.800 6.400 7.600 12 54.860 18
 l-6.300-11 18.800 6.400 7.600 12 54.860 18 l-6.300-11 18.800 6.400 7.600 12 54.860 18 l-6.300-11 18.800 6.400 7.600 12 54.860 18 l-6.300-11 18.800 6.400 7.600 12 54.860 18
 l-6.300-11 18.800 6.400 7.600 12 L3516.300 1483.700 3450.700 1388.300Z"/>
 <path class="dim" d="M2656 1127l26 9M700 529.300L1641 848.700M553.300 921.700L1641 848.700M705.700 531.300C690 556 678 578 670 595C658 619 648 640 639.300 660C630 681 621 702 613.300 723.300C605 746 597 768 590.700 790C583 814 577 838 572.300 860C567 882 563 902 560.300 921"/>
 <path d="M705.700 531.300l-10.500 14 4 3zM560.300 921l0-16 5.500 1z" stroke="#000"/>
 <path fill="none" stroke="#2ef0ff" d="M577.700 743.300L594.300 697.700 618.300 700.700 601 746.300Z"/>
 <text class="dimt" transform="translate(596 746) rotate(-69)">22,5°</text>
 <text class="dimt red" transform="translate(632 747) rotate(-69)">(v73)</text>
 <g stroke-width="4"><path d="M511 2022l5-32" stroke="#79cc79"/><path d="M517.500 1978l-5 13 9 1z" fill="#5cb85c"/><path d="M515 2025l34-2" stroke="#f28080"/><path d="M562 2021.500l-15-4 0 9z" fill="#e06a6a"/><path d="M512 2028l12 18" stroke="#7f9fe0"/><path d="M529.700 2053.300l-9-6 7-5z" fill="#5078d8"/></g>
 <circle cx="510.500" cy="2025" r="6.500" fill="#f4ea50" stroke="#a89c30"/>
 <text class="ax" x="565" y="2026" fill="#f05050">X</text><text class="ax" x="515" y="1975" fill="#50b850">Y</text><text class="ax" x="529" y="2062" fill="#4a7cf0">Z</text>
</svg>
</section>
</div>
</main>
</div>
<footer class="status"><span>Подтвердите формирование сопряжения или отредактируйте параметры</span><i></i></footer>
</body>
</html>
```

FILE: styles.css
```css
* { box-sizing: border-box; }
html, body { height: 100%; margin: 0; }
body { display: flex; flex-direction: column; background: #f0f0f0; color: #000; font: 11px/14px "Liberation Sans", sans-serif; overflow: hidden; }
.defs { position: absolute; width: 0; height: 0; }
button { display: grid; place-items: center; position: relative; width: 30px; height: 30px; padding: 0; border: 1px solid transparent; background: none; font: inherit; color: inherit; flex: none; }
button svg { width: 24px; height: 24px; overflow: visible; }
svg { display: block; flex: none; }
button.on { background: #d9eafb; border-color: #3c96ee; }
button.m::after { content: ""; position: absolute; right: 1px; bottom: 1px; border: 2px solid; border-color: transparent #666 #666 transparent; }
input { font: inherit; border: 0; padding: 0; min-width: 0; background: #fff; color: #000; }

.title { display: flex; justify-content: center; position: relative; height: 23px; background: #d3e36a; border-bottom: 1px solid #b4c254; }
.title h1 { margin: 0; font: 14px/24px "Open Sans", sans-serif; color: #2a2c14; }
.logo { position: absolute; left: 1px; top: 2px; }
.winbtns { position: absolute; right: 3px; top: 0; display: flex; gap: 5px; }
.winbtns button { width: 21px; height: 19px; }
.winbtns .close { width: 45px; background: #c75050; }
.winbtns svg, .mdi svg, .tree header svg { width: auto; height: auto; overflow: visible; }
.menu { display: flex; align-items: center; height: 34px; padding-left: 4px; gap: 15px; }
.menu a { color: #111; text-decoration: none; }
.menu > .grip { margin-right: -12px; }
.menu > svg { margin-right: -8px; }
.mdi { display: flex; margin-left: auto; gap: 1px; padding: 12px 2px 0 0; }
.mdi button { width: 15px; height: 14px; }

.grip { flex: none; width: 4px; height: 24px; border-left: 3px dashed #b0b0b0; border-image: repeating-linear-gradient(#a8a8a8 0 1px, #f4f4f4 1px 2px) 3; }
.bars { display: flex; flex-direction: column; gap: 4px; padding: 0 0 3px 4px; }
.bars svg, .left svg, .ttools svg, .acts svg { shape-rendering: crispEdges; }
.row { display: flex; height: 30px; }
.tb { display: flex; align-items: center; padding-right: 5px; background: #f2f2f2; }
.tb > .grip { margin-right: 2px; }
.row s, .ttools s { flex: none; width: 1px; height: 28px; margin: 0 3px 0 4px; background: #c8c8c8; }
.dd { flex: none; width: 13px; display: grid; place-items: center; }
.dd::before { content: ""; border: 3px solid transparent; border-top: 4px solid #000; border-bottom: 0; }
.dd.lo { margin-top: 18px; }
.dd.far { margin-left: 16px; }
.combo { display: flex; height: 20px; border: 1px solid #a0a0a0; background: #fff; }
.combo input { flex: 1; width: 20px; padding-left: 5px; }
.combo button { width: 15px; height: 18px; border-left-color: #a0a0a0; background: #f2f2f2; }
.zoom { width: 65px; margin: 0 1px 0 2px; }

.work { flex: 1; min-height: 0; display: grid; grid-template-columns: 34px 24px 1fr; }
.left { display: flex; flex-direction: column; align-items: center; align-self: start; padding: 2px 0 8px; background: #f2f2f2; }
.left > button { margin-left: -1px; }
.hgrip { width: 24px; height: 3px; background: repeating-linear-gradient(90deg, #b0b0b0 0 1px, #f4f4f4 1px 2px); }
.sets { margin: 4px 0 1px; }
.sets div { display: flex; align-items: center; height: 23px; gap: 1px; }
.sets .grip { height: 16px; }
.sets button { width: 24px; height: 23px; }
.sets svg { width: 22px; height: 21px; }
.left hr { width: 30px; height: 1px; margin: 3px 0 4px; border: 0; background: #c4c4c4; }
.back { margin: 2px 12px 0 0; border: 4px solid transparent; border-right-color: #000; border-left: 0; }
.props { background: #f7f7f7; padding-top: 4px; }
.vtab { display: flex; flex-direction: column; width: 21px; height: 102px; padding: 1px 2px; gap: 8px; border: 1px solid #a0a0a0; border-left: 0; background: #f2f2f2; color: #777; }
.vtab svg { width: 15px; height: 16px; background: #ccc; }
.vtab span { writing-mode: vertical-rl; font-size: 12px; }

main { display: flex; flex-direction: column; min-width: 0; min-height: 0; padding-top: 2px; }
.prop { display: grid; grid-template-columns: 98px 1fr; margin-right: 6px; }
.acts { display: grid; grid-template-columns: 6px 30px 30px 30px; grid-template-rows: 30px 30px; padding: 1px; background: #f4f4f4; }
.tall { grid-row: 1 / 3; height: 60px; }
.area { background: #f7f7f7; }
.fields { display: flex; align-items: center; height: 35px; margin: 0; padding: 5px 0 0 18px; border: 1px solid #a0a0a0; border-bottom-color: #000; background: #f1f1f1; }
.fields u, .menu u { text-underline-offset: 2px; }
.f1 { display: flex; align-items: center; gap: 5px; margin-right: 3px; }
.f1 input { width: 66px; height: 20px; padding-left: 4px; border: 1px solid #a0a0a0; background: #f1f1f1; }
.tg { width: 28px; height: 26px; margin-left: 2px; border: 1px solid #b0b0b0; border-bottom: 0; }
.fields > span + .tg { margin-left: 5px; }
.chk { display: flex; align-items: center; gap: 4px; margin: 0 16px 0 3px; }
.chk input { appearance: none; width: 20px; height: 20px; margin: 0; border: 1px solid #3c96ee; background: #e6f1fb; display: grid; place-items: center; }
.chk input::before { content: ""; width: 12px; height: 12px; background: #00007a; clip-path: polygon(0 20%, 25% 10%, 40% 60%, 80% 0, 100% 0, 45% 100%, 30% 100%); }
.angle { display: flex; align-items: center; height: 28px; margin-left: 1px; padding: 0 2px 0 1px; gap: 5px; border: 1px solid #3c96ee; border-bottom: 0; background: #d9eafb; }
.angle .combo { width: 63px; }
.angle .tg { height: 25px; margin: 2px 0 0 -3px; background: #f2f2f2; }
.ptabs { height: 32px; padding-left: 2px; }
.ptab { display: flex; align-items: center; gap: 1px; width: 94px; height: 32px; margin-top: -1px; padding-left: 4px; border: 0; border-right: 1px solid #000; border-bottom: 1px solid #000; background: #f4f4f4; }

.body { flex: 1; min-height: 0; display: flex; gap: 3px; padding: 5px 1px 0 0; }
.tree { display: flex; flex-direction: column; width: 376px; flex: none; margin-top: 1px; background: #f1f1f1; }
.tree header { display: flex; align-items: center; height: 18px; border: 1px solid #a0a0a0; border-radius: 2px; padding: 0 3px; }
.tree h2 { flex: 1; margin: 0; font: inherit; }
.tree header button { width: 13px; height: 14px; margin-left: 4px; }
.ttools { display: flex; align-items: center; padding: 2px 1px 2px; }
.ttools s { margin: 0 4px 0 3px; }
.tbox { flex: 1; min-height: 0; padding: 2px; border: 1px solid #a0a0a0; border-bottom-color: #000; }
.tin { position: relative; display: flex; flex-direction: column; height: 100%; padding: 1px; border: 1px solid #a0a0a0; background: #fff; overflow: hidden; }
.lines { position: absolute; left: 1px; top: 0; width: 100px; height: 260px; fill: none; stroke: #888; stroke-dasharray: 1 1; shape-rendering: crispEdges; }
.pm1 { stroke-dasharray: none; fill: #fff; }
.tree ul { position: relative; flex: 1; margin: 0; padding: 0; list-style: none; font-size: 12px; }
.tree li { display: flex; align-items: center; height: 28px; gap: 6px; white-space: nowrap; color: #1c0a1c; }
.tree li svg { width: 24px; height: 24px; }
.tree li.l0 svg { width: 13px; }
.l1 { padding-left: 18px; }
.l2 { padding-left: 49px; }
.l3 { padding-left: 80px; }
.tree li.lock { padding-left: 76px; gap: 3px; }
.tree li .pad { width: 9px; height: 14px; }
mark { background: #f0f0f0; color: inherit; line-height: 28px; padding: 0 2px; }
.scroll { display: flex; height: 15px; background: #f0f0f0; }
.scroll i { flex: 1; margin-left: 18px; background: #cdcdcd; }
.btabs { display: flex; height: 22px; padding-left: 2px; background: #f7f7f7; }
.btabs button { width: auto; height: 14px; margin-top: 3px; padding: 0 6px; border: 0; border-right: 1px solid #888; color: #888; }
.btabs .cur { height: 20px; margin-top: -1px; padding: 0 6px; border: 0; border-right: 1px solid #000; border-bottom: 1px solid #000; background: #f4f4f4; color: #000; }
.view { flex: 1; min-width: 0; margin-bottom: 3px; border: 1px solid #707070; border-width: 2px 1px 1px 2px; border-right-color: #fff; border-bottom-color: #ccc; }
.view svg { width: 100%; height: 100%; }
.status { display: flex; justify-content: space-between; height: 17px; margin: 0 2px 0 4px; padding: 0 0 0 1px; border: 1px solid #a0a0a0; line-height: 16px; }
.status i { width: 76px; border-left: 1px solid #a0a0a0; }

.k { fill: none; stroke: #000; }
.kw { fill: #fff; stroke: #000; }
.k2 { fill: none; stroke: #000; stroke-width: 2; }
.k3 { fill: none; stroke: #777; }
.k2g { fill: none; stroke: #555; stroke-width: 2; }
.g { fill: none; stroke: #a2a2a2; }
.gg { fill: none; stroke: #9a9a9a; stroke-width: 2; }
.ggg { stroke: #b0b0b0; stroke-width: 4; }
.lg { fill: none; stroke: #c4c4c4; }
.G { fill: #c6c6c6; stroke: #989898; }
.Gw { fill: #eee; stroke: #999; }
.n { fill: none; stroke: #000090; }
.nn { fill: none; stroke: #000090; stroke-width: 2; }
.nb { fill: none; stroke: #0000e8; }
.nc { fill: none; stroke: #0a2a9c; }
.blu { fill: #0018e0; }
.B { fill: #6a9cff; stroke: #000080; }
.C { fill: #00f0ff; stroke: #000080; }
.C2 { fill: #0ff; stroke: #004048; }
.D { fill: #0032c4; stroke: #000080; }
.S { fill: #9adcff; stroke: #0000a0; }
.A { fill: #1c9cf0; stroke: #000080; }
.V { fill: #78c8ff; stroke: #0000c0; }
.W { fill: #fff; stroke: #0000c0; }
.L { fill: #d4ecff; stroke: #1030a0; }
.L0 { fill: #a8dcff; }
.P { fill: #8c8c8c; stroke: #000; }
.P0 { fill: #ddd; stroke: #666; }
.O { fill: #f0e69a; stroke: #333; }
.Y { fill: #ffff7c; stroke: #b8a800; stroke-dasharray: 3 1; }
.ball { fill: #2a48f0; stroke: #9ab0ff; }
.q { font: bold 18px "DejaVu Sans Condensed", "DejaVu Sans", sans-serif; fill: #0000a8; }
.gr { fill: #bababa; }
.gold { fill: #ffe800; stroke: #554400; }
.fx { font: 16px "Noto Sans", sans-serif; fill: #000090; }
.sm { font: 11px "Noto Sans", sans-serif; }
.big { font: 20px "Noto Sans", sans-serif; }
.stop { font: bold 8px "Liberation Sans", sans-serif; fill: #fff; }
.dark { fill: #555; stroke: #111; }
.light { fill: #a8a8a8; stroke: #111; }
.dim { fill: none; stroke: #111; }
.dimt { font: italic 21px "Liberation Sans", sans-serif; }
.dimt.red { font-size: 18px; fill: #f02030; }
.ax { font: 13px "Liberation Sans", sans-serif; }
```
